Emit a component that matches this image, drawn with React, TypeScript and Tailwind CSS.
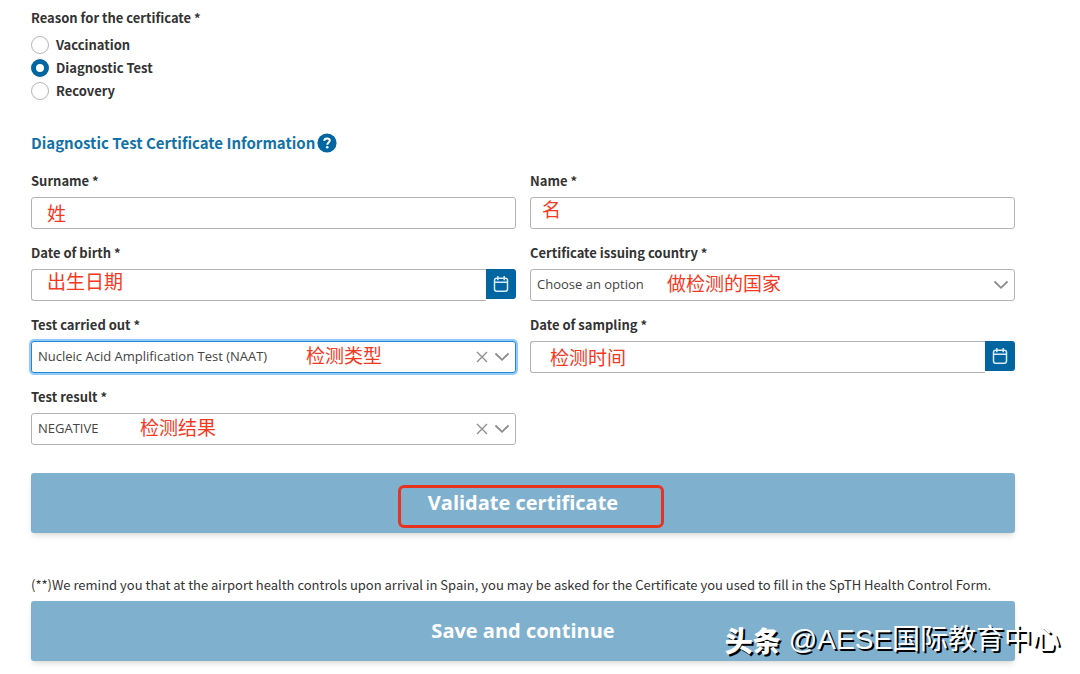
import React from 'react';
import clsx from 'clsx';

const reasons = ['Vaccination', 'Diagnostic Test', 'Recovery'];

const fieldBox = 'h-8 w-full rounded-[3px] border bg-white px-[6px]';

const CalendarIcon = () => (
  <svg viewBox="0 0 16 18" className="h-[18px] w-4" fill="none" stroke="#d9ecf7" strokeWidth="1.5">
    <rect x="1.5" y="3.2" width="13" height="13" rx="2.2" />
    <path d="M1.5 7.2h13M4.8 1v4.2M11.2 1v4.2" />
  </svg>
);

const ChevronIcon = () => (
  <svg viewBox="0 0 16 10" className="h-[10px] w-4" fill="none" stroke="#8c8c8c" strokeWidth="1.8">
    <path d="M1.5 1.5L8 7.8L14.5 1.5" />
  </svg>
);

const ClearIcon = () => (
  <svg viewBox="0 0 12 12" className="h-3 w-3" fill="none" stroke="#8c8c8c" strokeWidth="1.3">
    <path d="M1 1l10 10M11 1L1 11" />
  </svg>
);

const HelpIcon = () => (
  <svg viewBox="0 0 20 20" className="h-5 w-5">
    <circle cx="10" cy="10" r="9.6" fill="#0065a0" />
    <path
      d="M7.2 7.9C7.3 6.2 8.4 5.4 10 5.4c1.7 0 2.8.9 2.8 2.2 0 1.9-2.5 2-2.5 4.1"
      fill="none"
      stroke="#fff"
      strokeWidth="2"
    />
    <circle cx="10.2" cy="14.3" r="1.3" fill="#fff" />
  </svg>
);

type FieldProps = {
  id: string;
  label: string;
  note: string;
  noteClass: string;
  children: React.ReactNode;
};

// A labelled control with a red note on top of it
const Field = ({ id, label, note, noteClass, children }: FieldProps) => (
  <div className="flex flex-col gap-[6px]">
    <label htmlFor={id} className="text-[13px] leading-5 font-bold">
      {label} *
    </label>
    <div className="relative flex">
      {children}
      <span
        className={clsx(
          'pointer-events-none absolute text-[19px] leading-6 whitespace-nowrap text-[#f5391f]',
          noteClass
        )}
      >
        {note}
      </span>
    </div>
  </div>
);

const TextInput = ({ id }: { id: string }) => (
  <input id={id} type="text" className={clsx(fieldBox, 'border-[#b4b4b4]')} />
);

const DateInput = ({ id }: { id: string }) => (
  <>
    <input
      id={id}
      type="text"
      className={clsx(fieldBox, 'min-w-0 flex-1 rounded-r-none border-r-0 border-[#b4b4b4]')}
    />
    <button
      type="button"
      aria-label="Open calendar"
      className="flex h-[30px] w-[30px] shrink-0 items-center justify-center rounded-r-[3px] bg-[#0065a0]"
    >
      <CalendarIcon />
    </button>
  </>
);

type SelectInputProps = { id: string; value: string; clearable?: boolean; active?: boolean };

const SelectInput = ({ id, value, clearable, active }: SelectInputProps) => (
  <>
    <select
      id={id}
      className={clsx(
        fieldBox,
        "appearance-none font-['Open_Sans',sans-serif] text-[13px] text-[#444]",
        active ? 'border-[#2b86cf] ring-2 ring-[#8fcbfa]' : 'border-[#b4b4b4]'
      )}
    >
      <option>{value}</option>
    </select>
    <div className="pointer-events-none absolute inset-y-0 right-[6px] flex items-center gap-[6px]">
      {clearable && (
        <button type="button" aria-label="Clear" className="pointer-events-auto">
          <ClearIcon />
        </button>
      )}
      <ChevronIcon />
    </div>
  </>
);

const bigButton =
  "flex h-15 w-full justify-center rounded-[3px] bg-[#7fb1cf] font-['Open_Sans',sans-serif] text-xl font-bold text-white shadow-md shadow-black/10";

const App = () => {
  return (
    <main className="relative bg-white pt-2 pr-[65px] pb-3 pl-[31px] font-['Noto_Sans_CJK_SC',sans-serif] text-[#333]">
      <form>
        <fieldset>
          <legend className="text-[13px] leading-5 font-bold">Reason for the certificate *</legend>
          <div className="mt-[5px] flex flex-col">
            {reasons.map((reason) => (
              <label key={reason} className="flex h-[23px] items-center gap-[7px] text-[13px] leading-5 font-bold">
                <input
                  type="radio"
                  name="reason"
                  defaultChecked={reason === 'Diagnostic Test'}
                  className="h-[18px] w-[18px] appearance-none rounded-full border border-[#b4b4b4] bg-white checked:border-5 checked:border-[#0065a0]"
                />
                {reason}
              </label>
            ))}
          </div>
        </fieldset>

        <h2 className="mt-[29px] flex items-center gap-[2px] text-[15px] leading-6 font-bold text-[#1272a8]">
          Diagnostic Test Certificate Information
          <HelpIcon />
        </h2>

        <div className="mt-4 grid grid-cols-2 gap-[14px]">
          <Field id="surname" label="Surname" note="姓" noteClass="left-4 top-1">
            <TextInput id="surname" />
          </Field>
          <Field id="name" label="Name" note="名" noteClass="left-3 top-0">
            <TextInput id="name" />
          </Field>
          <Field id="birth" label="Date of birth" note="出生日期" noteClass="left-4 top-0">
            <DateInput id="birth" />
          </Field>
          <Field
            id="country"
            label="Certificate issuing country"
            note="做检测的国家"
            noteClass="left-[137px] top-[2px]"
          >
            <SelectInput id="country" value="Choose an option" />
          </Field>
          <Field id="test" label="Test carried out" note="检测类型" noteClass="left-[275px] top-[2px]">
            <SelectInput id="test" value="Nucleic Acid Amplification Test (NAAT)" clearable active />
          </Field>
          <Field id="sampling" label="Date of sampling" note="检测时间" noteClass="left-5 top-1">
            <DateInput id="sampling" />
          </Field>
          <Field id="result" label="Test result" note="检测结果" noteClass="left-[109px] top-[2px]">
            <SelectInput id="result" value="NEGATIVE" clearable />
          </Field>
        </div>

        <div className="relative mt-7">
          <button type="button" className={clsx(bigButton, 'pt-4')}>
            Validate certificate
          </button>
          <div className="pointer-events-none absolute top-3 left-1/2 ml-[-125px] h-[43px] w-[266px] rounded-md border-3 border-[#e8341f]" />
        </div>

        <p className="mt-[42px] text-[13px] leading-5">
          (**)We remind you that at the airport health controls upon arrival in Spain, you may be asked for the
          Certificate you used to fill in the SpTH Health Control Form.
        </p>
        <button type="submit" className={clsx(bigButton, 'mt-[6px] items-center')}>
          Save and continue
        </button>
      </form>

      <div className="absolute right-5 bottom-[13px] flex items-center gap-2 text-[28px] leading-10 whitespace-nowrap text-white [text-shadow:2px_2px_0_#000]">
        <span className="font-black">头条</span>
        <span className="font-['Liberation_Sans','Noto_Sans_CJK_SC',sans-serif]">@AESE国际教育中心</span>
      </div>
    </main>
  );
};

export default App;
